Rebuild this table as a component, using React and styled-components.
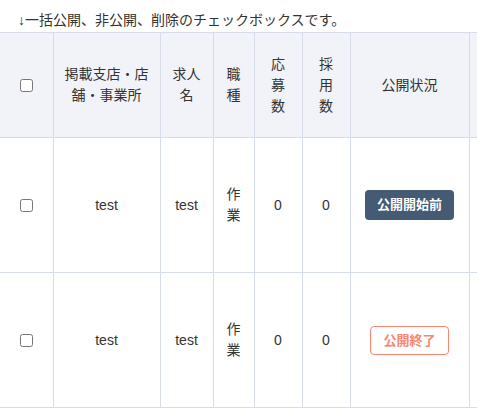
import React from "react";
import styled, { createGlobalStyle } from "styled-components";

const Global = createGlobalStyle`
  html, body { margin: 0; padding: 0; background: #fff; }
  body {
    font-family: "Liberation Sans", Arial, "Noto Sans CJK JP", sans-serif;
    color: #333;
    overflow: hidden;
  }
`;

const Page = styled.div`
  width: 477px;
  height: 415px;
  overflow: hidden;
`;

const Caption = styled.p`
  margin: 0;
  padding: 10px 0 2px 18px;
  height: 20px;
  font-size: 14px;
  line-height: 20px;
  color: #333;
  white-space: nowrap;
`;

const Table = styled.table`
  border-collapse: collapse;
  table-layout: fixed;
  width: 620px;
  font-size: 14px;
  line-height: 21px;
  color: #333;
`;

const HeadCell = styled.th`
  background: #f2f3f8;
  font-weight: normal;
  height: 104px;
  padding: 0 11px;
  text-align: center;
  vertical-align: middle;
  border: 1px solid #d7dde8;
  &:first-child { border-left: none; }
`;

const Cell = styled.td`
  height: 134px;
  padding: 0 11px;
  text-align: center;
  vertical-align: middle;
  border: 1px solid #d7dde8;
  &:first-child { border-left: none; }
`;

const Check = styled.input.attrs({ type: "checkbox" })`
  margin: 0;
  width: 13px;
  height: 13px;
  vertical-align: middle;
`;

const Status = styled.span`
  display: inline-block;
  box-sizing: border-box;
  height: ${(p) => (p.$variant === "ended" ? "29px" : "30px")};
  line-height: ${(p) => (p.$variant === "ended" ? "27px" : "30px")};
  padding: 0 12px;
  border-radius: 4px;
  font-size: 13px;
  font-weight: bold;
  white-space: nowrap;
  background: ${(p) => (p.$variant === "ended" ? "#fff" : "#455a73")};
  color: ${(p) => (p.$variant === "ended" ? "#f8876f" : "#fff")};
  border: ${(p) => (p.$variant === "ended" ? "1px solid #f8876f" : "none")};
`;

const widths = [53, 107, 53, 41, 48, 48, 119, 151];
const headers = ["", "掲載支店・店舗・事業所", "求人名", "職種", "応募数", "採用数", "公開状況", ""];

const rows = [
  { shop: "test", name: "test", job: "作業", apply: 0, hire: 0, status: "公開開始前", variant: "before" },
  { shop: "test", name: "test", job: "作業", apply: 0, hire: 0, status: "公開終了", variant: "ended" },
];

export default function App() {
  return (
    <Page>
      <Global />
      <Caption>↓一括公開、非公開、削除のチェックボックスです。</Caption>
      <Table>
        <colgroup>
          {widths.map((w, i) => (
            <col key={i} style={{ width: w }} />
          ))}
        </colgroup>
        <thead>
          <tr>
            {headers.map((h, i) => (
              <HeadCell key={i}>{i === 0 ? <Check /> : h}</HeadCell>
            ))}
          </tr>
        </thead>
        <tbody>
          {rows.map((r, i) => (
            <tr key={i}>
              <Cell><Check /></Cell>
              <Cell>{r.shop}</Cell>
              <Cell>{r.name}</Cell>
              <Cell>{r.job}</Cell>
              <Cell>{r.apply}</Cell>
              <Cell>{r.hire}</Cell>
              <Cell><Status $variant={r.variant}>{r.status}</Status></Cell>
              <Cell></Cell>
            </tr>
          ))}
        </tbody>
      </Table>
    </Page>
  );
}
